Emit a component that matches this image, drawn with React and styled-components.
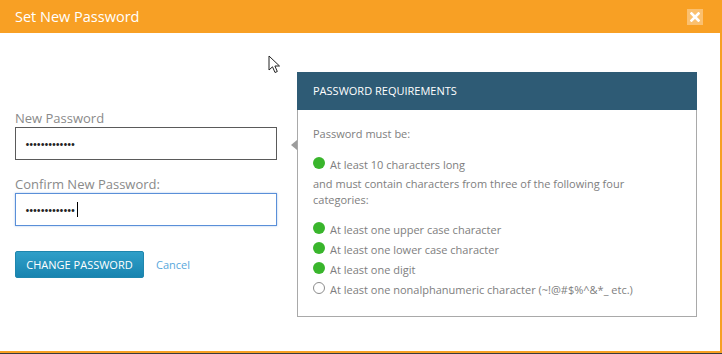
import React from "react";
import styled, { createGlobalStyle } from "styled-components";

const GlobalStyle = createGlobalStyle`
  html, body {
    margin: 0;
    padding: 0;
    background: #3a3a3a;
  }
  body {
    font-family: "Open Sans", "Liberation Sans", sans-serif;
  }
`;

const requirements = [
  { text: "At least one upper case character", met: true },
  { text: "At least one lower case character", met: true },
  { text: "At least one digit", met: true },
  { text: "At least one nonalphanumeric character (~!@#$%^&*_ etc.)", met: false },
];

export default function App() {
  return (
    <>
      <GlobalStyle />
      <Dialog>
        <Header>
          <Title>Set New Password</Title>
          <CloseButton aria-label="Close">
            <svg width="10" height="10" viewBox="0 0 10 10">
              <path
                d="M1.5 1.5 L8.5 8.5 M8.5 1.5 L1.5 8.5"
                stroke="#fff"
                strokeWidth="2.6"
                strokeLinecap="square"
              />
            </svg>
          </CloseButton>
        </Header>
        <Body>
          <Pointer width="14" height="19" viewBox="0 0 14 19">
            <path
              d="M1 1 L1 15 L4.5 11.8 L7 17.5 L9.3 16.5 L6.9 11 L11.5 11 Z"
              fill="#fff"
              stroke="#222"
              strokeWidth="1"
              strokeLinejoin="round"
            />
          </Pointer>
          <FormColumn>
            <Label>New Password</Label>
            <InputBox>
              <PasswordInput type="password" defaultValue="abcdefghijklm" readOnly />
            </InputBox>
            <Label $spaced>Confirm New Password:</Label>
            <InputBox $focused>
              <PasswordInput type="password" defaultValue="abcdefghijklm" readOnly />
              <Caret />
            </InputBox>
            <Actions>
              <PrimaryButton>CHANGE PASSWORD</PrimaryButton>
              <CancelLink href="#">Cancel</CancelLink>
            </Actions>
          </FormColumn>
          <Panel>
            <PanelHeader>PASSWORD REQUIREMENTS</PanelHeader>
            <PanelBody>
              <Intro>Password must be:</Intro>
              <Requirement>
                <Dot $met />
                At least 10 characters long
              </Requirement>
              <Note>
                and must contain characters from three of the following four
                categories:
              </Note>
              <List>
                {requirements.map((r) => (
                  <Requirement key={r.text}>
                    <Dot $met={r.met} />
                    {r.text}
                  </Requirement>
                ))}
              </List>
            </PanelBody>
          </Panel>
        </Body>
      </Dialog>
    </>
  );
}

const Dialog = styled.div`
  width: 722px;
  height: 353px;
  box-sizing: border-box;
  background: #fff;
  border-bottom: 2px solid #f7a023;
  display: flex;
  flex-direction: column;
`;

const Header = styled.div`
  height: 33px;
  background: #f8a024;
  display: flex;
  align-items: center;
  justify-content: space-between;
  padding: 0 19px 0 15px;
  flex-shrink: 0;
`;

const Title = styled.h1`
  margin: 0;
  font-size: 14.5px;
  font-weight: 400;
  color: #fff;
`;

const CloseButton = styled.button`
  width: 16px;
  height: 16px;
  padding: 0;
  border: none;
  background: #fbc06f;
  display: flex;
  align-items: center;
  justify-content: center;
  margin-top: 1px;
`;

const Body = styled.div`
  position: relative;
  flex: 1;
  display: flex;
  align-items: flex-start;
  padding-left: 15px;
  border-right: 2px solid #f7a023;
`;

const Pointer = styled.svg`
  position: absolute;
  left: 268px;
  top: 22px;
`;

const FormColumn = styled.div`
  width: 262px;
  padding-top: 76px;
  display: flex;
  flex-direction: column;
`;

const Label = styled.label`
  font-size: 13px;
  line-height: 18px;
  color: #8a8a8a;
  margin-top: ${(p) => (p.$spaced ? "15px" : "0")};
`;

const InputBox = styled.div`
  box-sizing: border-box;
  width: 262px;
  height: 33px;
  display: flex;
  align-items: center;
  padding: 0 9px;
  border: 1px solid ${(p) => (p.$focused ? "#5a8fd8" : "#5a5a5a")};
  box-shadow: ${(p) => (p.$focused ? "0 0 2px rgba(90,143,216,0.5)" : "none")};
`;

const PasswordInput = styled.input`
  width: 52px;
  padding: 0;
  border: none;
  outline: none;
  font-family: "Open Sans", "Liberation Sans", sans-serif;
  font-size: 13px;
  letter-spacing: -1.1px;
  color: #222;
  background: transparent;
`;

const Caret = styled.span`
  width: 1px;
  height: 15px;
  background: #000;
  margin-left: 0;
`;

const Actions = styled.div`
  display: flex;
  align-items: center;
  gap: 12px;
  margin-top: 25px;
`;

const PrimaryButton = styled.button`
  width: 129px;
  height: 27px;
  padding: 0;
  border: 1px solid #1f86ad;
  border-radius: 2px;
  background: linear-gradient(#309fc8, #1884b0);
  color: #fff;
  font-family: "Open Sans", "Liberation Sans", sans-serif;
  font-size: 11px;
  cursor: pointer;
`;

const CancelLink = styled.a`
  font-size: 11px;
  color: #58a8dc;
  text-decoration: none;
`;

const Panel = styled.section`
  position: relative;
  margin: 39px 0 0 20px;
  width: 400px;
  height: 245px;
  box-sizing: border-box;
  border: 1px solid #a9a9a9;
  border-top: none;

  &::before {
    content: "";
    position: absolute;
    left: -7px;
    top: 68px;
    border-style: solid;
    border-width: 5px 6px 5px 0;
    border-color: transparent #9c9c9c transparent transparent;
  }
`;

const PanelHeader = styled.div`
  height: 38px;
  margin: 0 -1px;
  background: #2e5b75;
  color: #fff;
  font-size: 11px;
  line-height: 38px;
  padding-left: 16px;
`;

const PanelBody = styled.div`
  padding: 16px 15px 0 15px;
  font-size: 11px;
  color: #7e7e7e;
`;

const Intro = styled.p`
  margin: 0 0 12px;
  line-height: 16px;
`;

const Note = styled.p`
  margin: 2px 0 11px;
  line-height: 16px;
`;

const List = styled.div`
  display: flex;
  flex-direction: column;
`;

const Requirement = styled.div`
  display: flex;
  align-items: center;
  gap: 5px;
  height: 20px;
`;

const Dot = styled.span`
  width: 12px;
  height: 12px;
  box-sizing: border-box;
  border-radius: 50%;
  flex-shrink: 0;
  margin-top: -2px;
  background: ${(p) => (p.$met ? "#39b52c" : "#fff")};
  border: ${(p) => (p.$met ? "none" : "1px solid #8c8c8c")};
`;
